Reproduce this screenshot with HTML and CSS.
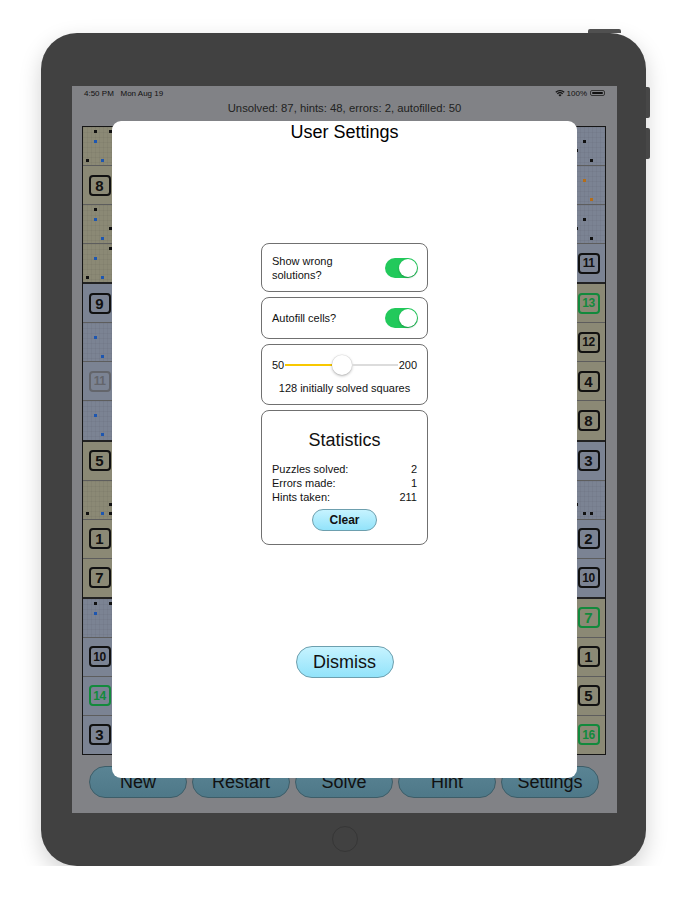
FILE: index.html
```html
<!DOCTYPE html>
<html>
<head>
<meta charset="utf-8">
<link rel="stylesheet" href="styles.css">
</head>
<body>
<div class="stage">
  <div class="device">
    <span class="hw-top"></span>
    <span class="hw-side hw-side1"></span>
    <span class="hw-side hw-side2"></span>
    <div class="screen">
      <div class="status">
        <span class="time">4:50 PM&nbsp;&nbsp;&nbsp;Mon Aug 19</span>
        <span class="sys">
          <svg class="wifi" width="10" height="8" viewBox="0 0 10 8"><path d="M5 7.6 L3.4 5.9 A2.3 2.3 0 0 1 6.6 5.9 Z" fill="#111"/><path d="M2.3 4.8 A4 4 0 0 1 7.7 4.8" stroke="#111" stroke-width="1.2" fill="none"/><path d="M0.8 3.2 A6.2 6.2 0 0 1 9.2 3.2" stroke="#111" stroke-width="1.2" fill="none"/></svg>
          <span>100%</span>
          <span class="battery"><span class="battery-fill"></span></span>
        </span>
      </div>
      <div class="summary">Unsolved: 87, hints: 48, errors: 2, autofilled: 50</div>
      <div class="board">
        <div class="col">
          <div class="cell tan"><div class="dots"><i class="k r0 c1"></i><i class="k r0 c3"></i><i class="b r1 c1"></i><i class="k r3 c0"></i><i class="b r3 c2"></i></div></div>
          <div class="cell tan"><span class="num">8</span></div>
          <div class="cell tan"><div class="dots"><i class="k r0 c1"></i><i class="b r1 c1"></i><i class="k r2 c3"></i><i class="b r3 c2"></i></div></div>
          <div class="cell tan"><div class="dots"><i class="k r0 c3"></i><i class="b r1 c1"></i><i class="k r3 c0"></i><i class="b r3 c2"></i></div></div>
          <div class="cell blue"><span class="num">9</span></div>
          <div class="cell blue"><div class="dots"><i class="b r1 c1"></i><i class="b r3 c2"></i></div></div>
          <div class="cell blue"><span class="num two faded">11</span></div>
          <div class="cell blue"><div class="dots"><i class="b r1 c1"></i><i class="b r3 c2"></i></div></div>
          <div class="cell tan"><span class="num">5</span></div>
          <div class="cell tan"><div class="dots"><i class="k r2 c3"></i><i class="k r3 c0"></i><i class="b r3 c2"></i><i class="k r3 c3"></i></div></div>
          <div class="cell tan"><span class="num">1</span></div>
          <div class="cell tan"><span class="num">7</span></div>
          <div class="cell blue"><div class="dots"><i class="k r0 c1"></i><i class="k r0 c3"></i><i class="b r1 c1"></i></div></div>
          <div class="cell blue"><span class="num two">10</span></div>
          <div class="cell blue"><span class="num two green">14</span></div>
          <div class="cell blue"><span class="num">3</span></div>
        </div>
        <div class="middle"></div>
        <div class="col">
          <div class="cell blue"><div class="dots"><i class="k r1 c1"></i><i class="k r2 c0"></i><i class="k r3 c2"></i></div></div>
          <div class="cell blue"><div class="dots"><i class="o r1 c1"></i><i class="o r3 c2"></i></div></div>
          <div class="cell blue"><div class="dots"><i class="k r1 c1"></i><i class="k r2 c0"></i><i class="k r3 c2"></i></div></div>
          <div class="cell blue"><span class="num two">11</span></div>
          <div class="cell tan"><span class="num two green">13</span></div>
          <div class="cell tan"><span class="num two">12</span></div>
          <div class="cell tan"><span class="num">4</span></div>
          <div class="cell tan"><span class="num">8</span></div>
          <div class="cell blue"><span class="num">3</span></div>
          <div class="cell blue"><div class="dots"><i class="k r2 c0"></i><i class="k r3 c1"></i><i class="k r3 c2"></i></div></div>
          <div class="cell blue"><span class="num">2</span></div>
          <div class="cell blue"><span class="num two">10</span></div>
          <div class="cell tan"><span class="num green">7</span></div>
          <div class="cell tan"><span class="num">1</span></div>
          <div class="cell tan"><span class="num">5</span></div>
          <div class="cell tan"><span class="num two green">16</span></div>
        </div>
      </div>
      <div class="toolbar">
        <button class="tool">New</button>
        <button class="tool">Restart</button>
        <button class="tool">Solve</button>
        <button class="tool">Hint</button>
        <button class="tool">Settings</button>
      </div>

      <div class="modal">
        <h1 class="modal-title">User Settings</h1>
        <div class="cards">
          <div class="card card-toggle1">
            <span class="label">Show wrong<br>solutions?</span>
            <span class="switch"><span class="knob"></span></span>
          </div>
          <div class="card card-toggle2">
            <span class="label">Autofill cells?</span>
            <span class="switch"><span class="knob"></span></span>
          </div>
          <div class="card card-slider">
            <div class="slider-row">
              <span>50</span>
              <span class="track"><span class="fill"></span><span class="thumb"></span><span class="rest"></span></span>
              <span>200</span>
            </div>
            <div class="slider-caption">128 initially solved squares</div>
          </div>
          <div class="card card-stats">
            <div class="stats-title">Statistics</div>
            <div class="stat"><span>Puzzles solved:</span><span>2</span></div>
            <div class="stat"><span>Errors made:</span><span>1</span></div>
            <div class="stat"><span>Hints taken:</span><span>211</span></div>
            <button class="clear">Clear</button>
          </div>
        </div>
        <button class="dismiss">Dismiss</button>
      </div>
    </div>
    <div class="home"></div>
  </div>
</div>
</body>
</html>
```
FILE: styles.css
```css
html, body {
  margin: 0;
  padding: 0;
  background: #ffffff;
  font-family: "Liberation Sans", Arial, sans-serif;
}

.stage {
  padding: 33px 0 0 41px;
}

.device {
  position: relative;
  width: 605px;
  height: 833px;
  box-sizing: border-box;
  padding: 53px 29px 0 31px;
  background: #414141;
  border-radius: 36px;
  box-shadow: 0 8px 22px rgba(0, 0, 0, 0.18);
}

.hw-top {
  position: absolute;
  top: -4px;
  left: 547px;
  width: 33px;
  height: 4px;
  background: #505050;
  border-radius: 2px 2px 0 0;
}

.hw-side {
  position: absolute;
  right: -4px;
  width: 4px;
  background: #474747;
  border-radius: 0 2px 2px 0;
}
.hw-side1 { top: 54px; height: 31px; }
.hw-side2 { top: 95px; height: 31px; }

.screen {
  position: relative;
  width: 545px;
  height: 727px;
  background: #818286;
  display: flex;
  flex-direction: column;
}

.status {
  height: 14px;
  padding: 0 12px 0 12px;
  display: flex;
  justify-content: space-between;
  align-items: center;
  font-size: 8px;
  color: #111;
}

.sys {
  display: flex;
  align-items: center;
  gap: 2px;
}

.battery {
  margin-left: 1px;
  width: 15px;
  height: 6px;
  border: 1px solid #333;
  border-radius: 2px;
  padding: 1px;
  box-sizing: border-box;
  display: flex;
  position: relative;
}
.battery-fill {
  flex: 1;
  background: #111;
  border-radius: 1px;
}

.summary {
  height: 16px;
  line-height: 16px;
  text-align: center;
  font-size: 11.3px;
  color: #222;
}

.board {
  margin: 10px 11px 0 10px;
  height: 629px;
  box-sizing: border-box;
  border: 1px solid #151515;
  display: flex;
}

.col {
  width: 33px;
  display: flex;
  flex-direction: column;
}

.middle {
  flex: 1;
  background: #85867a;
}

.cell {
  flex: 1;
  display: flex;
  align-items: center;
  justify-content: center;
  border-bottom: 1px solid #5d5d5d;
  min-height: 0;
}
.cell:nth-child(4n) {
  border-bottom: 2px solid #222;
}
.cell:last-child {
  border-bottom: none;
}

.tan { background: #8b8975; }
.blue { background: #7b8393; }

.num {
  width: 22px;
  height: 21px;
  box-sizing: border-box;
  border: 2px solid #111;
  border-radius: 4px;
  display: flex;
  align-items: center;
  justify-content: center;
  font-size: 15px;
  font-weight: bold;
  color: #111;
}
.num.two {
  font-size: 12px;
  letter-spacing: -0.5px;
}
.num.faded {
  border-color: #63656b;
  color: #63656b;
}
.num.green {
  border-color: #128a3c;
  color: #128a3c;
}

.dots {
  align-self: stretch;
  width: 100%;
  box-sizing: border-box;
  padding: 0 2px 0 1px;
  display: grid;
  grid-template-columns: repeat(4, 1fr);
  grid-template-rows: repeat(4, 1fr);
  background-image:
    linear-gradient(to right, rgba(0,0,0,0.035) 1px, transparent 1px),
    linear-gradient(to bottom, rgba(0,0,0,0.035) 1px, transparent 1px);
  background-size: 4px 5px;
}
.dots i {
  width: 3px;
  height: 3px;
  place-self: center;
}
.dots i.k { background: #111; }
.dots i.b { background: #1d56b0; }
.dots i.o { background: #b56d18; }
.r0 { grid-row: 1; }
.r1 { grid-row: 2; }
.r2 { grid-row: 3; }
.r3 { grid-row: 4; }
.c0 { grid-column: 1; }
.c1 { grid-column: 2; }
.c2 { grid-column: 3; }
.c3 { grid-column: 4; }

.toolbar {
  margin-top: 11px;
  padding: 0 18px 0 17px;
  display: flex;
  gap: 5px;
}

.tool {
  flex: 1;
  height: 32px;
  border-radius: 16px;
  border: 1px solid #3d5d68;
  background: linear-gradient(#5a8494, #4e7888);
  font-family: "Liberation Sans", Arial, sans-serif;
  font-size: 18px;
  color: #111;
  padding: 0;
}

.home {
  margin: 13px auto 0;
  width: 26px;
  height: 26px;
  box-sizing: border-box;
  border: 1px solid #363636;
  border-radius: 50%;
}

/* modal */
.modal {
  position: absolute;
  left: 40px;
  top: 35px;
  width: 465px;
  height: 657px;
  background: #ffffff;
  border-radius: 9px;
  display: flex;
  flex-direction: column;
  align-items: center;
}

.modal-title {
  margin: 0;
  font-size: 18px;
  font-weight: normal;
  line-height: 23px;
  color: #000;
}

.cards {
  margin-top: 99px;
  width: 167px;
  display: flex;
  flex-direction: column;
  gap: 5px;
}

.card {
  box-sizing: border-box;
  border: 1px solid #707070;
  border-radius: 8px;
  font-size: 11px;
  line-height: 14px;
  color: #111;
}

.card-toggle1, .card-toggle2 {
  display: flex;
  align-items: center;
  justify-content: space-between;
  padding: 0 9px 0 10px;
}
.card-toggle1 { height: 49px; }
.card-toggle2 { height: 42px; }

.switch {
  width: 33px;
  height: 20px;
  border-radius: 10px;
  background: #22c95b;
  display: flex;
  justify-content: flex-end;
  align-items: center;
  padding: 1px;
  box-sizing: border-box;
}
.knob {
  width: 18px;
  height: 18px;
  border-radius: 50%;
  background: #fff;
  box-shadow: 0 1px 2px rgba(0, 0, 0, 0.25);
}

.card-slider {
  height: 61px;
  padding: 10px 10px 0 10px;
}
.slider-row {
  display: flex;
  align-items: center;
  height: 20px;
}
.track {
  flex: 1;
  display: flex;
  align-items: center;
  margin: 0 1px;
}
.fill {
  width: 47px;
  height: 2px;
  background: #f8c800;
}
.thumb {
  width: 20px;
  height: 20px;
  border-radius: 50%;
  background: #fff;
  box-shadow: 0 1px 3px rgba(0, 0, 0, 0.3), 0 0 0 0.5px rgba(0,0,0,0.08);
}
.rest {
  flex: 1;
  height: 2px;
  background: #dcdcdc;
}
.slider-caption {
  margin-top: 6px;
  text-align: center;
}

.card-stats {
  height: 135px;
  padding: 18px 10px 0 10px;
  display: flex;
  flex-direction: column;
}
.stats-title {
  font-size: 18px;
  line-height: 22px;
  text-align: center;
  margin-bottom: 11px;
}
.stat {
  display: flex;
  justify-content: space-between;
  height: 14px;
  line-height: 14px;
}
.clear {
  align-self: center;
  margin-top: 5px;
  width: 65px;
  height: 22px;
  border-radius: 11px;
  border: 1px solid #6d9fae;
  background: linear-gradient(#c6f3ff, #92e3fa);
  font-family: "Liberation Sans", Arial, sans-serif;
  font-weight: bold;
  font-size: 12px;
  color: #111;
  padding: 0;
}

.dismiss {
  margin-top: 101px;
  width: 98px;
  height: 32px;
  border-radius: 16px;
  border: 1px solid #6d9fae;
  background: linear-gradient(#c6f3ff, #92e3fa);
  font-family: "Liberation Sans", Arial, sans-serif;
  font-size: 18px;
  color: #111;
  padding: 0;
}
```
